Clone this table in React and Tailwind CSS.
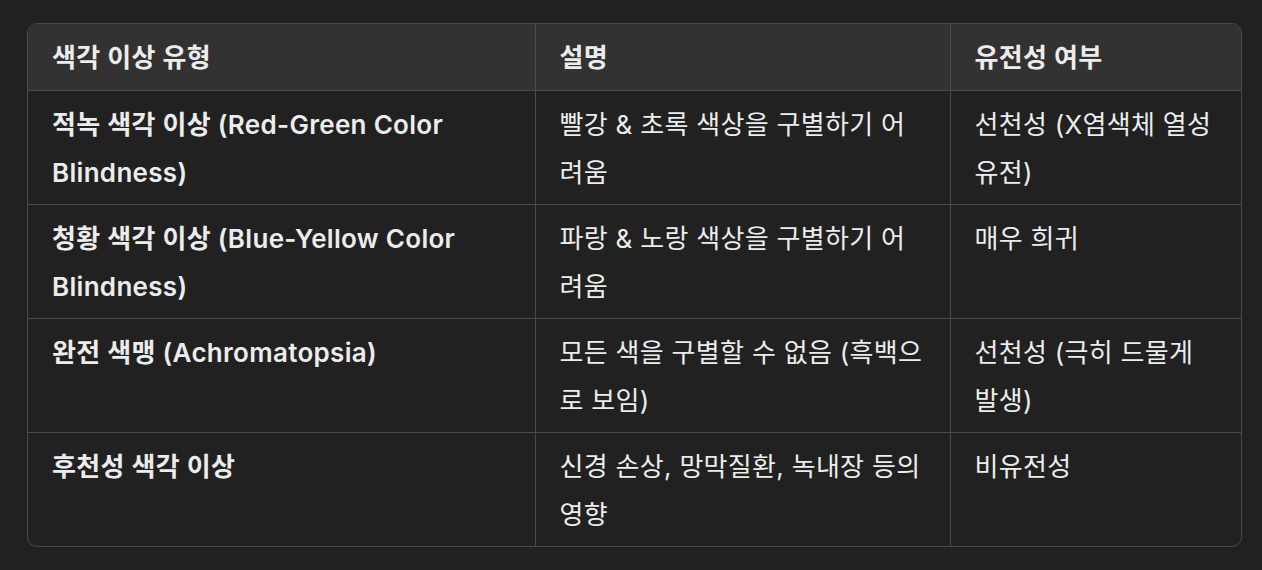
import React from 'react';

const rows = [
  ['적녹 색각 이상 (Red-Green Color Blindness)', '빨강 & 초록 색상을 구별하기 어려움', '선천성 (X염색체 열성 유전)'],
  ['청황 색각 이상 (Blue-Yellow Color Blindness)', '파랑 & 노랑 색상을 구별하기 어려움', '매우 희귀'],
  ['완전 색맹 (Achromatopsia)', '모든 색을 구별할 수 없음 (흑백으로 보임)', '선천성 (극히 드물게 발생)'],
  ['후천성 색각 이상', '신경 손상, 망막질환, 녹내장 등의 영향', '비유전성'],
];

export default function App() {
  return (
    <div
      className="w-[1262px] h-[570px] bg-[#212121] pt-[23px] pl-[27px] text-[#ececec]"
      style={{ fontFamily: '"Inter", "Noto Sans CJK KR", sans-serif' }}
    >
      <div className="w-[1215px] border border-[#4a4a4a] rounded-[10px] overflow-hidden">
        <table className="w-full table-fixed border-collapse text-[26px] leading-[48px] tracking-[0.3px]">
          <colgroup>
            <col className="w-[507px]" />
            <col className="w-[415px]" />
            <col />
          </colgroup>
          <thead>
            <tr className="bg-[#323232]">
              <th className="text-left font-semibold px-[24px] pt-[10px] pb-[8px] border-r border-[#4a4a4a]">색각 이상 유형</th>
              <th className="text-left font-semibold px-[24px] pt-[10px] pb-[8px] border-r border-[#4a4a4a]">설명</th>
              <th className="text-left font-semibold px-[24px] pt-[10px] pb-[8px]">유전성 여부</th>
            </tr>
          </thead>
          <tbody>
            {rows.map((r, i) => (
              <tr key={i} className="border-t border-[#4a4a4a]">
                <td className="align-top font-semibold px-[24px] pt-[10px] pb-[7px] border-r border-[#4a4a4a]">{r[0]}</td>
                <td className="align-top px-[24px] pt-[10px] pb-[7px] border-r border-[#4a4a4a]">{r[1]}</td>
                <td className="align-top px-[24px] pt-[10px] pb-[7px]">{r[2]}</td>
              </tr>
            ))}
          </tbody>
        </table>
      </div>
    </div>
  );
}
